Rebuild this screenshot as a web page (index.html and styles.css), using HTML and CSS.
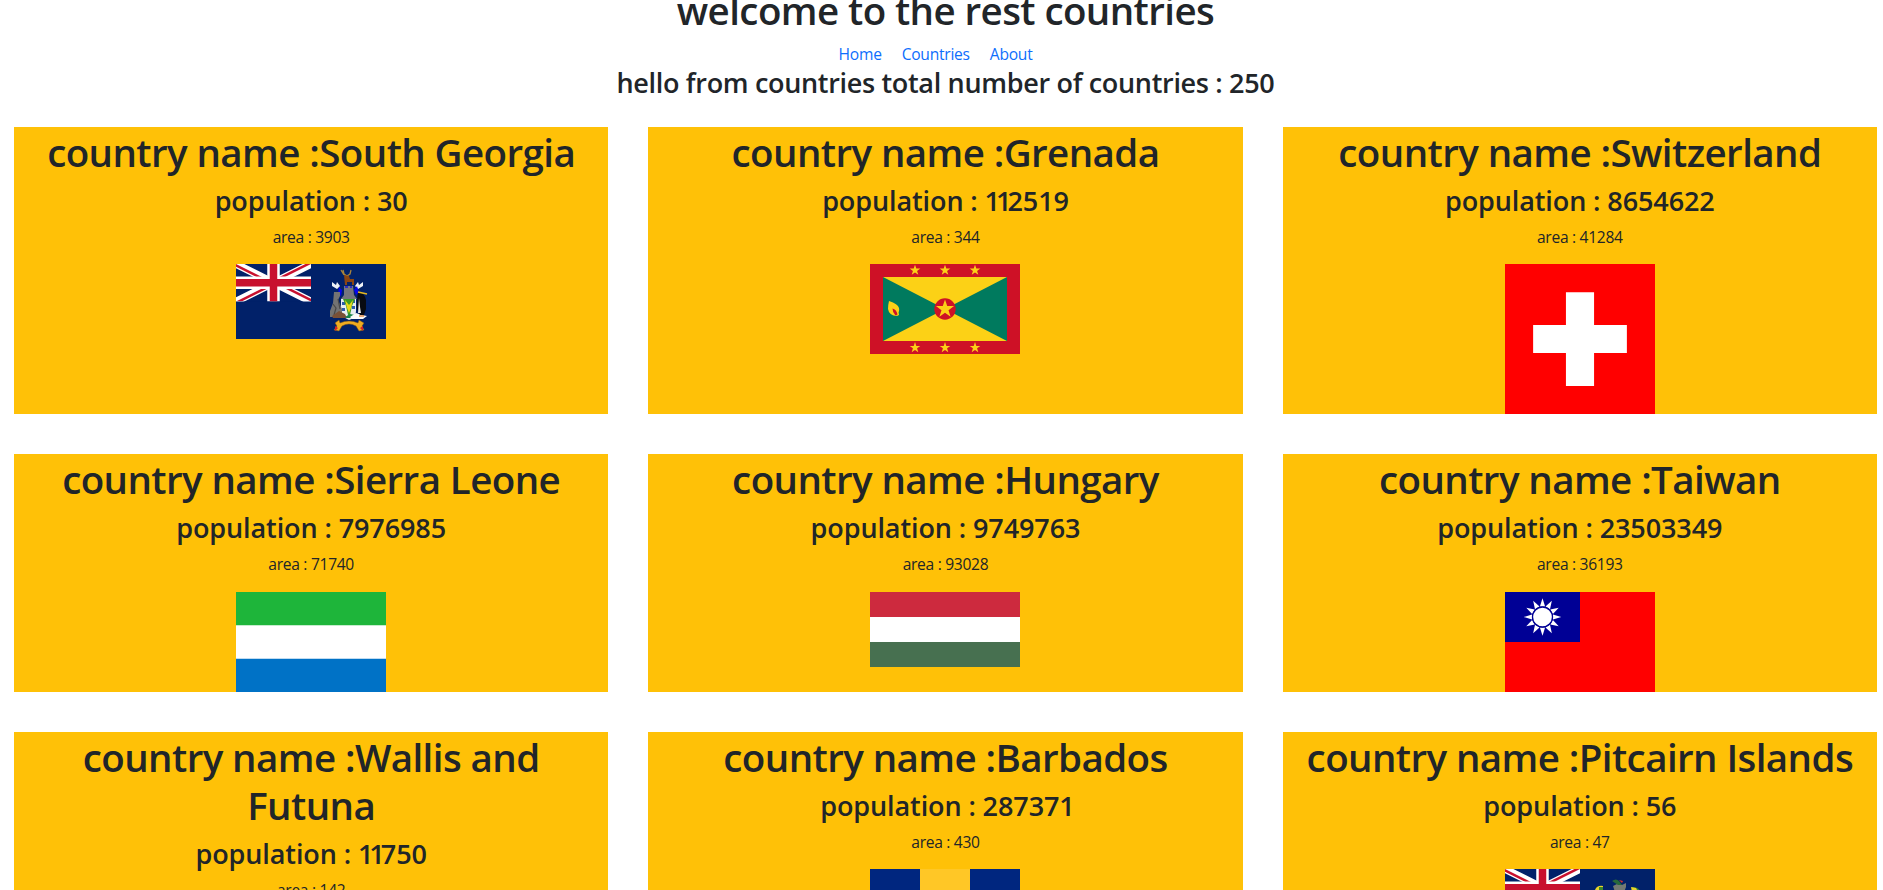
FILE: index.html
```html
<!DOCTYPE html>
<html lang="en">
<head>
<meta charset="utf-8">
<title>Rest Countries</title>
<link rel="stylesheet" href="styles.css">
</head>
<body>
<svg class="defs" width="0" height="0" aria-hidden="true">
  <defs>
    <clipPath id="uk-clip"><path d="M30,15h30v15zv15h-30zh-30v-15zv-15h30z"/></clipPath>
    <clipPath id="uk-box"><path d="M0,0h60v30h-60z"/></clipPath>
    <g id="union" clip-path="url(#uk-box)">
      <path d="M0,0h60v30h-60z" fill="#012169"/>
      <path d="M0,0L60,30M60,0L0,30" stroke="#fff" stroke-width="6"/>
      <path d="M0,0L60,30M60,0L0,30" clip-path="url(#uk-clip)" stroke="#c8102e" stroke-width="4"/>
      <path d="M30,0v30M0,15h60" stroke="#fff" stroke-width="10"/>
      <path d="M30,0v30M0,15h60" stroke="#c8102e" stroke-width="6"/>
    </g>
    <path id="star" d="M0,-10L2.35,-3.1L9.5,-3.1L3.7,1.2L5.9,8.1L0,3.9L-5.9,8.1L-3.7,1.2L-9.5,-3.1L-2.35,-3.1z"/>
  </defs>
</svg>
<header class="site-header">
  <h1 class="title site-title">welcome to the rest countries</h1>
  <nav class="nav"><a class="link" href="#">Home</a><a class="link" href="#">Countries</a><a class="link" href="#">About</a></nav>
</header>
<main>
  <h3 class="subtitle total">hello from countries total number of countries : 250</h3>
  <section class="countries">
    <article class="card">
      <h1 class="title">country name :South Georgia</h1>
      <h3 class="subtitle">population : 30</h3>
      <p class="area">area : 3903</p>
      <svg class="flag" width="150" height="75" viewBox="0 0 150 75">
        <path d="M0,0h150v75H0z" fill="#012169"/>
        <use href="#union" transform="scale(1.25)"/>
        <path d="M107,6l1,4 3,2 M115,6l-1,4-3,2 M105,6l3,5" fill="none" stroke="#a8843c" stroke-width="1.3"/>
        <path d="M108,11l5,1 1,3h4v6h-2v-3h-5v3h-2z" fill="#8a4513"/>
        <path d="M96,18l4,3 1,-3 3,4 -3,3 -5,-3zM127,18l-4,3 -1,-3 -3,4 3,3 5,-3z" fill="#eef2f6"/>
        <path d="M103,23l3,3 -1,6 -3,-2zM121,22l-3,4 2,5 3,-2z" fill="#0505ee"/>
        <path d="M108,22h9l1,9 3,4h-16l3,-4z" fill="#75757d"/>
        <path d="M109,23h3M114,23h2" stroke="#1616d8" stroke-width="1.5"/>
        <path d="M105,35h15v12q0,7 -7,9q-8,-3 -8,-11z" fill="#e8edf2"/>
        <path d="M106,38h3v3h-3zM116,42h3v3h-3zM106,44h3v3h-3zM116,36h3v3h-3z" fill="#2c5cab"/>
        <path d="M107,35h12l-3,7 -2,9h-2l-2,-9z" fill="#3a9a28"/>
        <path d="M109,36l4,5 4,-5 -2,8 -2,5 -2,-5z" fill="#e8d817"/>
        <path d="M98,28h6v4l-2,4 4,9v8H94v-6l3,-8z" fill="#737373"/>
        <path d="M97,40l3,4 -2,7M102,35l2,10" stroke="#484848" stroke-width="1.2" fill="none"/>
        <path d="M96,52l7,-5 6,3 2,4H97z" fill="#795037"/>
        <path d="M109,53l5,-3 5,1 -1,3h-7z" fill="#18834a"/>
        <path d="M114,53l6,-4 6,2 5,1 -4,3h-11z" fill="#fafafa"/>
        <path d="M122,28q6,0 8,8v9l-2,6h-4l-3,-6v-8z" fill="#080b12"/>
        <path d="M123,34l1,9 1,6h-3z" fill="#e8e8e8"/>
        <path d="M122,28l9,2" stroke="#e6b91e" stroke-width="1.6"/>
        <path d="M123,52h5" stroke="#df7826" stroke-width="1.2"/>
        <path d="M99,59l4,-3 1,3q9,-4 18,0l1,-3 5,3 -2,3 2,4 -5,1 -3,-5q-7,-4 -14,0l-3,5 -5,-1 3,-4z" fill="#f0ac20" stroke="#7c5715" stroke-width=".5"/>
        <path d="M99,62l3,2 -3,3zM127,62l-3,2 3,3z" fill="#d4202a"/>
      </svg>
    </article>
    <article class="card">
      <h1 class="title">country name :Grenada</h1>
      <h3 class="subtitle">population : <span class="tight">11</span>2519</h3>
      <p class="area">area : 344</p>
      <svg class="flag" width="150" height="90" viewBox="0 0 150 90">
        <path d="M0,0h150v90H0z" fill="#ce1126"/>
        <path d="M13,13h124v64H13z" fill="#007a5e"/>
        <path d="M13,13h124L13,77h124z" fill="#fcd116"/>
        <circle cx="75" cy="45" r="10.7" fill="#ce1126"/>
        <g fill="#fcd116">
          <use href="#star" transform="translate(75 45)scale(.95)"/>
          <use href="#star" transform="translate(45 6.3)scale(.56)"/>
          <use href="#star" transform="translate(75 6.3)scale(.56)"/>
          <use href="#star" transform="translate(105 6.3)scale(.56)"/>
          <use href="#star" transform="translate(45 83.7)scale(.56)"/>
          <use href="#star" transform="translate(75 83.7)scale(.56)"/>
          <use href="#star" transform="translate(105 83.7)scale(.56)"/>
          <path d="M19,37q9,3 10,7q1,4 -3,8q-7,-1 -8,-7q0,-4 1,-8zM23,45q6,0 6,6l-2,1q-4,-2 -4,-7z"/>
        </g>
        <path d="M22.500,44.500q4,1 5,6l-2,1q-3,-3 -3,-7z" fill="#ce1126"/>
      </svg>
    </article>
    <article class="card">
      <h1 class="title">country name :Switzerland</h1>
      <h3 class="subtitle">population : 8654622</h3>
      <p class="area">area : 41284</p>
      <svg class="flag" width="150" height="150" viewBox="0 0 32 32"><path d="M0,0h32v32H0z" fill="#f00"/><path d="M13,6h6v7h7v6h-7v7h-6v-7H6v-6h7z" fill="#fff"/></svg>
    </article>
    <article class="card">
      <h1 class="title">country name :Sierra Leone</h1>
      <h3 class="subtitle">population : 7976985</h3>
      <p class="area">area : 71740</p>
      <svg class="flag" width="150" height="100" viewBox="0 0 9 6"><path d="M0,0h9v6H0z" fill="#fff"/><path d="M0,0h9v2H0z" fill="#1eb53a"/><path d="M0,4h9v2H0z" fill="#0072c6"/></svg>
    </article>
    <article class="card">
      <h1 class="title">country name :Hungary</h1>
      <h3 class="subtitle">population : 9749763</h3>
      <p class="area">area : 93028</p>
      <svg class="flag" width="150" height="75" viewBox="0 0 6 3"><path d="M0,0h6v3H0z" fill="#fff"/><path d="M0,0h6v1H0z" fill="#cd2a3e"/><path d="M0,2h6v1H0z" fill="#477050"/></svg>
    </article>
    <article class="card">
      <h1 class="title">country name :Taiwan</h1>
      <h3 class="subtitle">population : 23503349</h3>
      <p class="area">area : 36193</p>
      <svg class="flag" width="150" height="100" viewBox="0 0 150 100">
        <path d="M0,0h150v100H0z" fill="#f00"/><path d="M0,0h75v50H0z" fill="#000095"/>
        <g transform="translate(37.500 25)" fill="#fff">
          <g id="rays"><path id="ray" d="M-2.600,-10.500L0,-18.700L2.600,-10.500z"/><use href="#ray" transform="rotate(30)"/><use href="#ray" transform="rotate(60)"/></g>
          <use href="#rays" transform="rotate(90)"/><use href="#rays" transform="rotate(180)"/><use href="#rays" transform="rotate(270)"/>
          <circle r="10" stroke="#000095" stroke-width="1.300"/>
        </g>
      </svg>
    </article>
    <article class="card">
      <h1 class="title">country name :Wallis and Futuna</h1>
      <h3 class="subtitle">population : <span class="tight">11</span>750</h3>
      <p class="area">area : 142</p>
    </article>
    <article class="card">
      <h1 class="title">country name :Barbados</h1>
      <h3 class="subtitle">population : 28737<span class="tight">1</span></h3>
      <p class="area">area : 430</p>
      <svg class="flag" width="150" height="100" viewBox="0 0 150 100"><path d="M0,0h150v100H0z" fill="#00267f"/><path d="M50,0h50v100H50z" fill="#ffc726"/></svg>
    </article>
    <article class="card">
      <h1 class="title">country name :Pitcairn Islands</h1>
      <h3 class="subtitle">population : 56</h3>
      <p class="area">area : 47</p>
      <svg class="flag" width="150" height="75" viewBox="0 0 150 75">
        <path d="M0,0h150v75H0z" fill="#012169"/>
        <use href="#union" transform="scale(1.25)"/>
        <path d="M108,17l4,-2 5,1 4,-2v4l-3,8h-7z" fill="#747a72"/>
        <path d="M107,12q4,-3 7,0l3,4h-4z" fill="#27693b"/>
        <path d="M114,11l4,1 -1,2z" fill="#d8332d"/>
        <path d="M90,21q2,-5 8,-4v6h-8z" fill="#e8d42a"/><path d="M94,18l4,0v6h-4z" fill="#398530"/>
        <path d="M127,18q6,0 8,4h-8z" fill="#3b8731"/><path d="M126,18l5,1 2,4h-6z" fill="#e8d42a"/>
      </svg>
    </article>
  </section>
</main>
</body>
</html>
```
FILE: styles.css
```css
* {
  box-sizing: border-box;
}

body {
  margin: 0;
  height: 890px;
  overflow: hidden;
  padding: 0 6px 0 14px;
  display: flow-root;
  background: #fff;
  color: #212529;
  font: 400 15.6px/24px "Open Sans", "Noto Sans", sans-serif;
  text-align: center;
}

.defs {
  display: block;
}

.title {
  margin: 0 0 7px;
  padding: 1px 12px 0;
  font-size: 38.5px;
  font-weight: 600;
  line-height: 48px;
  letter-spacing: -0.58px;
}

.site-title {
  margin-top: -15px;
}

.subtitle {
  margin: 0 0 7px;
  padding-top: 1px;
  font-size: 27px;
  font-weight: 600;
  line-height: 33.6px;
  letter-spacing: -0.1px;
}

.total {
  letter-spacing: -0.32px;
}

.tight {
  letter-spacing: -4px;
}

.nav {
  display: flex;
  justify-content: center;
}

.link {
  margin-right: 20px;
  padding-top: 0.5px;
  height: 24px;
  color: #0d6efd;
  text-decoration: none;
  letter-spacing: -0.25px;
}

.countries {
  display: grid;
  grid-template-columns: repeat(3, 1fr);
  gap: 40px;
  padding-top: 20px;
}

.card {
  background: #ffc107;
}

.area {
  margin: 0 0 15.5px;
  padding-top: 0.5px;
  letter-spacing: -0.3px;
}

.flag {
  display: block;
  margin: 0 auto;
}
```
